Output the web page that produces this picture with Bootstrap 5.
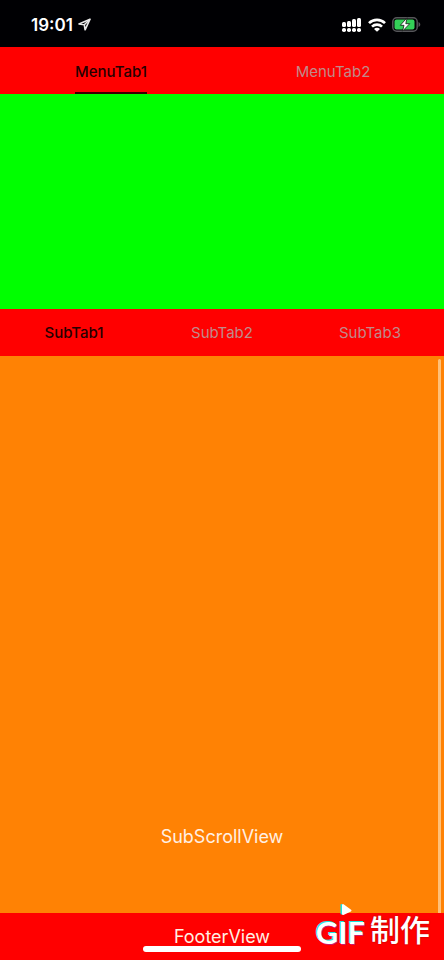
<!DOCTYPE html>
<html lang="en">
<head>
<meta charset="utf-8">
<meta name="viewport" content="width=device-width, initial-scale=1">
<title>Nested scroll tabs</title>
<link href="https://cdn.jsdelivr.net/npm/bootstrap@5.3.0/dist/css/bootstrap.min.css" rel="stylesheet">
<style>
  body { font-family: Inter, "Noto Sans CJK SC", sans-serif; background: #ff0000; }
  .status { height: 47px; background: #000003; padding: 2px 23px 0 31px; }
  .status-icons { gap: 6px; }
  .clock { font-size: 17px; line-height: 20px; font-weight: 600; }
  .tabs { height: 47px; background: #ff0000; }
  .tab { border: 0; background: none; padding: 0; font-size: 15px; line-height: 20px; color: #c08a8a; }
  .tab.active { color: #260000; font-weight: 500; }
  .tab-label { height: 46px; padding-top: 2px; border-bottom: 2px solid transparent; }
  .tabs-main .tab-label { padding-top: 4px; }
  .tabs-main .active .tab-label { border-color: #380000; }
  .hero { height: 215px; background: #00ff00; }
  .pane { background: #ff8204; padding-bottom: 64px; }
  .view-label { font-size: 18px; line-height: 24px; color: #fff0e4; }
  .thumb { width: 3px; top: 3px; bottom: 0; right: 3px; background: #ffc078; border-radius: 2px 2px 0 0; }
  .foot { height: 47px; background: #ff0000; }
  .home { width: 158px; height: 6px; bottom: 8px; background: #fff; }
  .stamp { right: 14px; bottom: 10px; color: #fff; line-height: 36px; }
  .stamp-gif { font-family: Lato, sans-serif; font-size: 31px; font-weight: 700; padding-top: 3px; text-shadow: -1px -1px 0 #19e5e5, 1px 1px 0 #d0186a; }
  .stamp-han { font-family: "Noto Sans CJK SC", sans-serif; font-size: 30px; font-weight: 500; margin-left: 5px; padding-bottom: 4px; text-shadow: 0 0 2px #a00000; }
  .stamp-play { left: 23px; top: -7px; }
</style>
</head>
<body>
<div class="d-flex flex-column min-vh-100">
  <header class="status d-flex align-items-center justify-content-between text-white">
    <div class="d-flex align-items-center gap-1">
      <span class="clock">19:01</span>
      <svg width="14" height="13" viewBox="0 0 14 13" fill="none" stroke="#e8e8e8" stroke-width="1.6" stroke-linejoin="round" aria-hidden="true"><path d="M13 1.200 2 6l5.300.8.8 5z"/><path d="M13 1.200 7.300 6.800"/></svg>
    </div>
    <div class="status-icons d-flex align-items-center">
      <svg width="20" height="14" viewBox="0 0 20 14" fill="#fff" aria-hidden="true">
        <rect x="0" y="4" width="4" height="5" rx="1.500"/><rect x="5" y="3" width="4" height="6" rx="1.500"/><rect x="10" y="1" width="4" height="8" rx="1.500"/><rect x="15" y="0" width="4" height="9" rx="1.500"/>
        <rect x="0" y="10" width="4" height="4" rx="1.800"/><rect x="5" y="10" width="4" height="4" rx="1.800"/><rect x="10" y="10" width="4" height="4" rx="1.800"/><rect x="15" y="10" width="4" height="4" rx="1.800"/>
      </svg>
      <svg width="18" height="14" viewBox="0 0 18 14" fill="none" stroke="#fff" stroke-width="2.600" aria-hidden="true"><path d="M1 5.200a11.200 11.200 0 0 1 16 0M4 8.700a7 7 0 0 1 10 0"/><path d="M9 13.800 6 10.900a4.200 4.200 0 0 1 6 0z" fill="#fff" stroke="none"/></svg>
      <svg width="29" height="15" viewBox="0 0 29 15" aria-hidden="true"><rect x=".8" y=".8" width="24.400" height="13.400" rx="4" fill="none" stroke="#56565a" stroke-width="1.500"/><path d="M26.500 5v5c1-.4 1.800-1.400 1.800-2.500S27.500 5.400 26.500 5z" fill="#56565a"/><rect x="2.500" y="2.500" width="20" height="10" rx="2" fill="#34d158"/><path d="M15 .8 8.300 8.300H12L10.500 14.200 17.700 6.700H13.800z" fill="#fff" stroke="#101410" stroke-width=".8"/></svg>
    </div>
  </header>

  <nav class="tabs tabs-main d-flex" aria-label="Menu tabs">
    <button type="button" class="tab active flex-fill w-50"><span class="tab-label d-inline-flex align-items-center">MenuTab1</span></button>
    <button type="button" class="tab flex-fill w-50"><span class="tab-label d-inline-flex align-items-center">MenuTab2</span></button>
  </nav>
  <section class="hero"></section>
  <nav class="tabs row g-0" aria-label="Sub tabs">
    <button type="button" class="tab active col-4"><span class="tab-label d-inline-flex align-items-center">SubTab1</span></button>
    <button type="button" class="tab col-4"><span class="tab-label d-inline-flex align-items-center">SubTab2</span></button>
    <button type="button" class="tab col-4"><span class="tab-label d-inline-flex align-items-center">SubTab3</span></button>
  </nav>
  <main class="pane flex-grow-1 position-relative d-flex align-items-end justify-content-center">
    <span class="view-label">SubScrollView</span>
    <div class="thumb position-absolute"></div>
  </main>
  <footer class="foot position-relative d-flex align-items-center justify-content-center">
    <span class="view-label">FooterView</span>
    <div class="home position-absolute start-50 translate-middle-x rounded-pill"></div>
    <div class="stamp position-absolute d-flex align-items-center">
      <span class="stamp-gif">GIF</span><span class="stamp-han" lang="zh">制作</span>
      <svg class="stamp-play position-absolute" width="14" height="13" viewBox="0 0 14 13" aria-hidden="true"><path d="M2.500 2v8.500L9.500 8z" fill="#19e5e5" stroke="#19e5e5" stroke-width="2" stroke-linejoin="round"/><path d="M4 2v9L11.500 7.500z" fill="#fff" stroke="#fff" stroke-width="2" stroke-linejoin="round"/></svg>
    </div>
  </footer>
</div>
<script src="https://cdn.jsdelivr.net/npm/bootstrap@5.3.0/dist/js/bootstrap.bundle.min.js"></script>
</body>
</html>
